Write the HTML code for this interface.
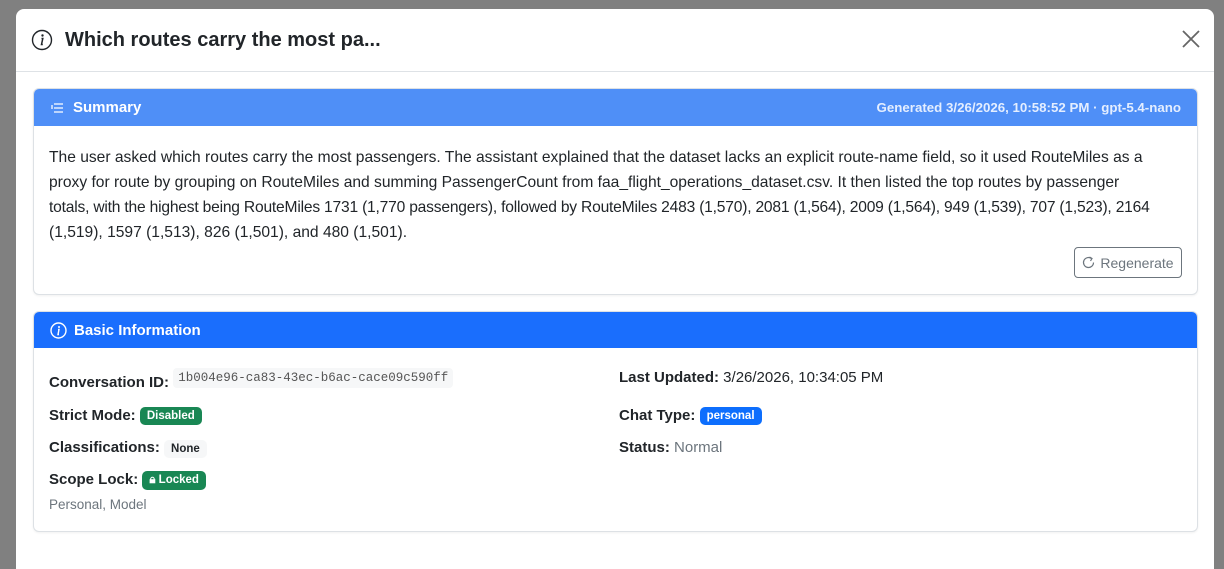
<!DOCTYPE html>
<html><head><style>
*{box-sizing:border-box;margin:0;padding:0}
body{width:1224px;height:543px;background:#808080;font-family:"Liberation Sans",sans-serif;color:#212529;overflow:hidden;position:relative}
.modal{position:absolute;left:16px;top:9px;width:1198px;height:560px;background:#fff;border-radius:8px 8px 0 0}
.mh{height:63px;border-bottom:1px solid #dee2e6;display:flex;align-items:center;padding-left:15px}
.mh h5{font-size:20px;font-weight:bold;margin-left:12px}
.close{position:absolute;right:14px;top:21px}
.card{position:absolute;left:17px;width:1165px;border:1px solid #dde1e5;border-radius:6px;background:#fff;overflow:hidden;box-shadow:0 1px 2px rgba(0,0,0,.06)}
.ch{height:37px;color:#fff;font-weight:bold;font-size:15px;display:flex;align-items:center;padding:0 16px}
.ch .r{margin-left:auto;font-size:13.3px;color:#e4eeff}
.txt{padding:19px 15px 0 15px;font-size:15.6px;line-height:25px;white-space:nowrap}
.btn{position:absolute;right:15px;top:158px;width:108px;height:31px;border:1px solid #6c757d;border-radius:4px;color:#6c757d;font-size:14px;display:flex;align-items:center;justify-content:center;gap:5px}
.row{position:absolute;font-size:15px}
b{font-weight:bold}
.bd{display:inline-block;color:#fff;font-size:11.5px;font-weight:bold;padding:3px 7px;border-radius:5px;vertical-align:1px}
.g{background:#198754}.bl{background:#0d6efd}
.none{display:inline-block;background:#f6f7f8;font-size:11.5px;font-weight:bold;padding:3px 7px;border-radius:5px;color:#212529}
.code{display:inline-block;background:#f6f7f8;font-family:"Liberation Mono",monospace;font-size:12.5px;color:#555;padding:3px 5px;border-radius:4px;vertical-align:6px}
</style></head><body>
<div class="modal">
 <div class="mh">
  <svg width="22" height="22" viewBox="0 0 22 22"><circle cx="11" cy="11" r="9.5" fill="none" stroke="#212529" stroke-width="1.4"/><circle cx="11.5" cy="6.5" r="1.2" fill="#212529"/><path d="M10.5 9.5h1.3l-1.3 6h1.3" fill="none" stroke="#212529" stroke-width="1.5"/></svg>
  <h5>Which routes carry the most pa...</h5>
 </div>
 <svg class="close" width="18" height="18" viewBox="0 0 18 18"><path d="M1 1L17 17M17 1L1 17" stroke="#666" stroke-width="1.8"/></svg>
 <div class="card" style="top:79px;height:207px">
  <div class="ch" style="background:#4f8ff7"><svg width="14" height="12" viewBox="0 0 14 12" style="margin-right:9px"><path d="M4 2h9M4 6h9M4 10h9M1 4h2M1 6h2" stroke="#fff" stroke-width="1.3"/></svg>Summary<span class="r">Generated 3/26/2026, 10:58:52 PM · gpt-5.4-nano</span></div>
  <div class="txt">The user asked which routes carry the most passengers. The assistant explained that the dataset lacks an explicit route-name field, so it used RouteMiles as a<br>proxy for route by grouping on RouteMiles and summing PassengerCount from faa_flight_operations_dataset.csv. It then listed the top routes by passenger<br><span style="letter-spacing:-0.2px">totals, with the highest being RouteMiles 1731 (1,770 passengers), followed by RouteMiles 2483 (1,570), 2081 (1,564), 2009 (1,564), 949 (1,539), 707 (1,523), 2164</span><br>(1,519), 1597 (1,513), 826 (1,501), and 480 (1,501).</div>
  <div class="btn"><svg width="13" height="13" viewBox="0 0 13 13"><path d="M9.5 2.5A5 5 0 1 0 11.5 6.5" fill="none" stroke="#6c757d" stroke-width="1.2"/><path d="M7.5 1l2.5 1.5-1.5 2.5" fill="none" stroke="#6c757d" stroke-width="1.2"/></svg>Regenerate</div>
 </div>
 <div class="card" style="top:302px;height:221px">
  <div class="ch" style="background:#1a6efd;height:36px"><svg width="17" height="17" viewBox="0 0 17 17" style="margin-right:7px"><circle cx="8.5" cy="8.5" r="7.5" fill="none" stroke="#fff" stroke-width="1.4"/><circle cx="9" cy="5" r="1" fill="#fff"/><path d="M8 7.5h1l-1 5h1" fill="none" stroke="#fff" stroke-width="1.4"/></svg>Basic Information</div>
  <div class="row" style="left:15px;top:56px"><b>Conversation ID:</b> <span class="code">1b004e96-ca83-43ec-b6ac-cace09c590ff</span></div>
  <div class="row" style="left:15px;top:95px"><b>Strict Mode:</b> <span class="bd g">Disabled</span></div>
  <div class="row" style="left:15px;top:127px"><b>Classifications:</b> <span class="none">None</span></div>
  <div class="row" style="left:15px;top:159px"><b>Scope Lock:</b> <span class="bd g">&#128274;&#xFE0E; Locked</span></div>
  <div class="row" style="left:15px;top:185px;font-size:13.5px;color:#6c757d">Personal, Model</div>
  <div class="row" style="left:585px;top:57px"><b>Last Updated:</b> 3/26/2026, 10:34:05 PM</div>
  <div class="row" style="left:585px;top:95px"><b>Chat Type:</b> <span class="bd bl">personal</span></div>
  <div class="row" style="left:585px;top:127px"><b>Status:</b> <span style="color:#6c757d">Normal</span></div>
 </div>
</div>
</body></html>
